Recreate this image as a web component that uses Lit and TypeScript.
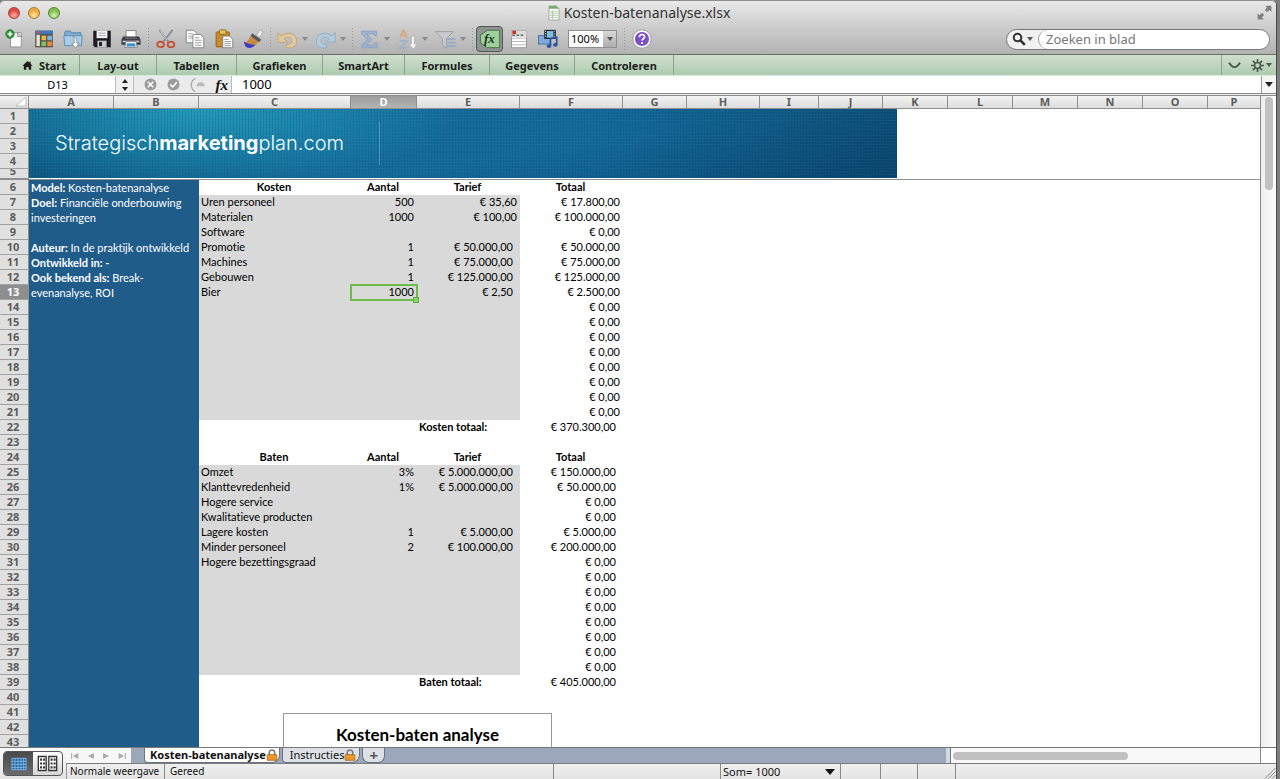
import { LitElement, html, css, svg, nothing } from "lit";
import { customElement, property, state } from "lit/decorators.js";
import { classMap } from "lit/directives/class-map.js";
import { styleMap } from "lit/directives/style-map.js";

const icons: Record<string, unknown> = {
  create: svg`<rect x="6.5" y="4.500" width="13" height="17" fill="#fcfcfc" stroke="#8b8b8b"/><path d="M15 4.500l4.500 4.500H15z" fill="#ddd" stroke="#8b8b8b"/><circle cx="6" cy="6" r="5" fill="#2f9a34" stroke="#1c6e22"/><path d="M6 3v6M3 6h6" stroke="#fff" stroke-width="2"/>`,
  gallery: svg`<rect x="1.500" y="2" width="21" height="20" fill="#5a5148"/><rect x="1.500" y="2" width="21" height="4" fill="#3b78bb"/><path d="M3 4h4" stroke="#e44" stroke-width="2"/><rect x="3" y="7" width="4" height="13.500" fill="#e9e4d8"/><rect x="9" y="8" width="5.500" height="5.500" fill="#e8b64a"/><rect x="16" y="8" width="5.500" height="5.500" fill="#79b5e2"/><rect x="9" y="15" width="5.500" height="5.500" fill="#79c265"/><rect x="16" y="15" width="5.500" height="5.500" fill="#e98a3a"/>`,
  open: svg`<path d="M2 4.500l1-2h6l1 2h11.500v14H2z" fill="#7fb0d4" stroke="#4a7ea6"/><path d="M1 8h22l-1 12H2z" fill="#a7cde8" stroke="#5588ae"/><path d="M12 9c4 1 5 4 4.500 8h3L15 23l-4.500-6h3c.5-3 0-6-1.500-8z" fill="#fff" stroke="#777" stroke-width=".8"/>`,
  save: svg`<path d="M1.500 2h21v20H3.500l-2-2z" fill="#1d1d1f"/><rect x="5.500" y="2" width="13" height="9" fill="#f4f4f4"/><path d="M7.500 5h9M7.500 8h9" stroke="#999"/><rect x="6.500" y="14" width="11" height="8" fill="#c9c9cc"/><rect x="8.500" y="15.500" width="3.500" height="5" fill="#222"/>`,
  print: svg`<rect x="6" y="2" width="12" height="8" fill="#fff" stroke="#777"/><path d="M2.500 9h19l2 4v6h-23v-6z" fill="#3b3d42"/><path d="M5 11h14" stroke="#888"/><path d="M2 15h20" stroke="#c9ccd2" stroke-width="2"/><path d="M6 15h12l1.500 7h-15z" fill="#fff" stroke="#777"/><path d="M7 17h10l.6 4H6.400z" fill="#3f92cd"/>`,
  cut: svg`<path d="M4 1l10.500 14M20 1L9 15" stroke="#8a8f96" stroke-width="2.200" fill="none"/><path d="M5 2l8 11" stroke="#eee" stroke-width=".8"/><ellipse cx="5.500" cy="18.500" rx="4" ry="3.200" fill="none" stroke="#c4553b" stroke-width="2.300"/><ellipse cx="18" cy="18.500" rx="4" ry="3.200" fill="none" stroke="#c4553b" stroke-width="2.300"/>`,
  copy: svg`<path d="M1.500 1.500h9l4 4v11h-13z" fill="#fafafa" stroke="#777"/><path d="M4 5.500h5M4 8.500h7M4 11h7" stroke="#999"/><path d="M9.500 6.500h9l4 4v12h-13z" fill="#fff" stroke="#777"/><path d="M12 10.500h5M12 13.500h8M12 16.500h8M12 19.500h8" stroke="#888"/>`,
  paste: svg`<rect x="2.500" y="3.500" width="16" height="18" rx="1" fill="#c98b2d" stroke="#8b5d18"/><rect x="6.500" y="1" width="8" height="5.500" rx="1" fill="#e2c15b" stroke="#86631a"/><path d="M10.500 8.500h8l4 4v10h-12z" fill="#fff" stroke="#777"/><path d="M12.500 12.500h5M12.500 15h8M12.500 17.500h8M12.500 20h8" stroke="#888"/>`,
  brush: svg`<path d="M16 8l4-7 4 2.500-4 6.500z" fill="#eee" stroke="#999" stroke-width=".8"/><path d="M11 5l11 8-3 3-10-7z" fill="#55565c"/><path d="M9 8l9.500 7.500c-3 4-8 7-12.500 6-2-.5-4-3-5-6 4 1 6-3 8-7.500z" fill="#c98a45"/><path d="M1 15c3 2 9 4 14 4-3 4.500-10 5-12.500 1z" fill="#3b3fc4"/>`,
  undo: svg`<path d="M1 4v11h11l-4-3.500c4-3.500 9-2 9 2 0 2.500-1.500 4-4.500 4H11v4h4c4.500 0 7.500-3.500 7.500-8C22.500 5 11 2 4.800 8z" fill="#e2c8a0" stroke="#c4a06a"/>`,
  redo: svg`<path d="M23 4v11H12l4-3.500c-4-3.500-9-2-9 2 0 2.500 1.500 4 4.500 4H13v4H9c-4.500 0-7.500-3.500-7.500-8C1.500 5 13 2 19.200 8z" fill="#b3cbdc" stroke="#88adc8"/>`,
  sum: svg`<path d="M3 2.500h17v5h-2.500l-1-2H9l5.500 6.500L8 18.500h8.500l1.500-2.500h2.500v5.500H3v-3L9.500 12 3 5.500z" fill="#9db3cf" stroke="#7f99bb" stroke-width=".8"/>`,
  sort: svg`<path d="M3.500 10L7.500 1l4 9M5 7.500h5" stroke="#d2ab85" stroke-width="2.200" fill="none"/><path d="M3 13.500h8.500L3.500 21.500h8.500" stroke="#a0b1c9" stroke-width="2.200" fill="none"/><path d="M16.500 8v9h-3l5 6 5-6h-3.500V8z" fill="#f2f2f2" stroke="#aaa" stroke-width=".8"/>`,
  filter: svg`<path d="M.5 3h20.500L13 11v11l-4.500-4v-7z" fill="#c9c9cb" stroke="#9a9a9c"/><path d="M14 11.500h9.500M14 15.500h9.500M14 19.500h9.500" stroke="#93abc9" stroke-width="2"/>`,
  fx: svg`<path d="M9 2.500h13.500v19H9L1.500 16V8z" fill="#9fcf9d" stroke="#3f6a42"/>`,
  report: svg`<rect x="3" y="2" width="18" height="20.500" fill="#fff" stroke="#8b8b8b"/><rect x="3" y="2" width="18" height="7.500" fill="#dcdcdc"/><path d="M4 4h4.500" stroke="#c8372d" stroke-width="4"/><path d="M4 7.500h3M9 7.500h3M14 7.500h3" stroke="#666" stroke-width="2"/><path d="M3 11h18M3 15h18M3 19h18" stroke="#aaa"/>`,
  media: svg`<rect x="0.500" y="8" width="14" height="10" fill="#7fa9dd" stroke="#3c66a2"/><rect x="7.500" y="1" width="14" height="11" fill="#23272e"/><rect x="10.500" y="2.500" width="8" height="8" fill="#7cc0ea"/><path d="M9 2v9M20 2v9" stroke="#ddd" stroke-dasharray="1.500 1.500"/><path d="M15 20.500V11.500l7.500-1.500v9" stroke="#2c55a0" stroke-width="2" fill="none"/><ellipse cx="13.200" cy="20.500" rx="2.800" ry="2.300" fill="#2c55a0"/><ellipse cx="20.800" cy="19" rx="2.800" ry="2.300" fill="#2c55a0"/>`,
  help: svg`<circle cx="12" cy="12" r="11" fill="#fff" stroke="#8d8d99"/><circle cx="12" cy="12" r="8.500" fill="#7a51c4"/><path d="M8.800 9.800c0-4.200 6.400-4.200 6.400-.4 0 2.300-3 2.300-3 4.400M12.200 15.500v2.500" stroke="#fff" stroke-width="2" fill="none"/>`,
  document: svg`<path d="M4.500 1.500h11l4 4v17h-15z" fill="#fff" stroke="#888"/><path d="M4.500 1.500h11l4 4h-15z" fill="#6fae63"/><path d="M6 10h12M6 13h12M6 16h12M6 19h12M10 8v14" stroke="#8fbd86"/>`,
  home: svg`<path d="M12 2L1 12.500h3V21h5.500v-6h5v6H20v-8.500h3L19 8.500V4h-3v2z" fill="#1c1c1c"/>`,
  full: svg`<path d="M13 1h10v10l-3.200-3.200L16 11.500 12.500 8l3.700-3.700zM11 23H1V13l3.200 3.200L8 12.500 11.500 16l-3.700 3.700z" fill="#808080"/>`,
  search: svg`<circle cx="9.500" cy="9.500" r="6.500" fill="none" stroke="#333" stroke-width="3.500"/><path d="M14 14l8 8" stroke="#333" stroke-width="4.500"/>`,
  chevron: svg`<path d="M2 7Q12 23 22 7" fill="none" stroke="#3d5540" stroke-width="3.500"/>`,
  gear: svg`<circle cx="12" cy="12" r="5.500" fill="none" stroke="#4c5a4d" stroke-width="3"/><path d="M12 0v6M12 18v6M0 12h6M18 12h6M3.500 3.500l4.200 4.200M16.300 16.300l4.200 4.200M20.500 3.500l-4.200 4.200M7.700 16.300l-4.200 4.200" stroke="#4c5a4d" stroke-width="3"/>`,
  cancel: svg`<circle cx="12" cy="12" r="11" fill="#9c9c9c"/><path d="M7 7l10 10M17 7L7 17" stroke="#fff" stroke-width="3"/>`,
  accept: svg`<circle cx="12" cy="12" r="11" fill="#9c9c9c"/><path d="M6 12l4.500 4.500L18 8" stroke="#fff" stroke-width="3" fill="none"/>`,
  builder: svg`<path d="M8 2C0 6 0 18 8 22" fill="none" stroke="#aaa" stroke-width="2"/><path d="M10 14a6 6 0 0 1 12 0z" fill="#bbb"/>`,
  lock: svg`<path d="M6.500 12V7.500a5.500 5.500 0 0 1 11 0V12" fill="none" stroke="#777" stroke-width="3"/><rect x="2" y="11" width="20" height="12" rx="1.500" fill="#e58a1c" stroke="#94560d"/><path d="M3 14.500h18M3 18h18" stroke="#f6c16c"/>`,
  normal: svg`<rect x="1" y="3" width="22" height="18" fill="#2b5f94"/><path d="M1 3.500h22M1 8h22M1 12.500h22M1 17h22M1 20.500h22M1.500 3v18M6 3v18M10.500 3v18M15 3v18M19 3v18M22.500 3v18" stroke="#7dbdf0" stroke-width="1.300"/>`,
  layout: svg`<path d="M1.500 4h9v16h-9zM13.500 4h9v16h-9z" fill="#fff" stroke="#333" stroke-width="1.500"/><path d="M3.500 7.500h6M3.500 12h6M3.500 16.500h6M15.500 7.500h6M15.500 12h6M15.500 16.500h6" stroke="#333" stroke-width="2.500" stroke-dasharray="2.300 1.200"/>`,
  grip: svg`<path d="M2 23L23 2M9 23L23 9M16 23l7-7" stroke="#888" stroke-width="2"/>`,
  first: svg`<path d="M4 5v14" stroke="#aaa" stroke-width="2.500"/><path d="M20 5v14L7 12z" fill="#aaa"/>`,
  prev: svg`<path d="M19 5v14L5 12z" fill="#aaa"/>`,
  next: svg`<path d="M5 5v14l14-7z" fill="#aaa"/>`,
  last: svg`<path d="M20 5v14" stroke="#aaa" stroke-width="2.500"/><path d="M4 5v14l13-7z" fill="#aaa"/>`,
};

@customElement("x-icon")
class XIcon extends LitElement {
  @property() name = "";
  @property({ type: Number }) size = 20;
  static styles = css`
    :host { display: inline-flex; flex: none; }
  `;
  render() {
    return html`<svg width=${this.size} height=${this.size} viewBox="0 0 24 24" aria-hidden="true">${icons[this.name]}</svg>`;
  }
}

type Row = { c?: string; d?: string; e?: string; f?: string; head?: boolean; grey?: boolean; total?: boolean; flush?: boolean };

const columns: [string, number | null][] = [
  ["A", 85], ["B", 85], ["C", 152], ["D", 66], ["E", 103], ["F", 103], ["G", 64], ["H", 73],
  ["I", 59], ["J", 64], ["K", 65], ["L", 65], ["M", 65], ["N", 65], ["O", 65], ["P", null],
];

const rows: Record<number, Row> = {
  6: { c: "Kosten", d: "Aantal", e: "Tarief", f: "Totaal", head: true },
  7: { c: "Uren personeel", d: "500", e: "€ 35,60", f: "€ 17.800,00", flush: true },
  8: { c: "Materialen", d: "1000", e: "€ 100,00", f: "€ 100.000,00", flush: true },
  9: { c: "Software", f: "€ 0,00" },
  10: { c: "Promotie", d: "1", e: "€ 50.000,00", f: "€ 50.000,00" },
  11: { c: "Machines", d: "1", e: "€ 75.000,00", f: "€ 75.000,00" },
  12: { c: "Gebouwen", d: "1", e: "€ 125.000,00", f: "€ 125.000,00" },
  13: { c: "Bier", d: "1000", e: "€ 2,50", f: "€ 2.500,00" },
  22: { e: "Kosten totaal:", f: "€ 370.300,00", total: true },
  24: { c: "Baten", d: "Aantal", e: "Tarief", f: "Totaal", head: true },
  25: { c: "Omzet", d: "3%", e: "€ 5.000.000,00", f: "€ 150.000,00" },
  26: { c: "Klanttevredenheid", d: "1%", e: "€ 5.000.000,00", f: "€ 50.000,00" },
  27: { c: "Hogere service", f: "€ 0,00" },
  28: { c: "Kwalitatieve producten", f: "€ 0,00" },
  29: { c: "Lagere kosten", d: "1", e: "€ 5.000,00", f: "€ 5.000,00" },
  30: { c: "Minder personeel", d: "2", e: "€ 100.000,00", f: "€ 200.000,00" },
  31: { c: "Hogere bezettingsgraad", f: "€ 0,00" },
  39: { e: "Baten totaal:", f: "€ 405.000,00", total: true },
};
for (let n = 14; n <= 21; n++) rows[n] = { f: "€ 0,00" };
for (let n = 32; n <= 38; n++) rows[n] = { f: "€ 0,00" };
for (let n = 7; n <= 38; n++) if (n < 22 || n > 24) rows[n].grey = true;

@customElement("sheet-grid")
class SheetGrid extends LitElement {
  static styles = css`
    :host { display: block; position: relative; overflow: hidden; background: #fff; flex: 1; min-width: 0;
      border-right: 1px solid #8a8a8a; border-top: 1px solid #8a8a8a; box-sizing: border-box; }
    table { border-collapse: separate; border-spacing: 0; table-layout: fixed; width: 100%;
      font: 11px/14px Lato, sans-serif; font-variant-ligatures: none; color: #000; }
    th, td { padding: 0; height: 15px; white-space: nowrap; box-sizing: border-box; }
    td { vertical-align: top; }
    thead th { height: 13px; font: 700 11px/12px "Noto Sans", sans-serif; color: #5c5c5c;
      background: linear-gradient(#f4f4f4, #dcdcdc); border-right: 1px solid #8f8f8f; border-bottom: 1px solid #8f8f8f; }
    thead th.active { background: linear-gradient(#9c9c9c, #b4b4b4); color: #fff; }
    thead th:last-child { border-right: 0; }
    .corner svg { display: block; margin-left: auto; margin-right: 1px; }
    tbody th { font: 700 11px/14px "Noto Sans", sans-serif; color: #5c5c5c; background: #e0e0e0;
      border-right: 1px solid #8f8f8f; border-bottom: 1px solid #a2a2a2; padding-right: 2px; }
    tbody th.active { background: #8e8e8e; color: #fff; }
    .short th, .short { height: 11px; }
    .short th { border-bottom: 2px solid #8f8f8f; vertical-align: top; }
    .clip { display: flex; align-items: flex-end; justify-content: center; height: 7px; line-height: 10px; overflow: hidden; }
    .bannercell { border-bottom: 1px solid #8f8f8f; }
    .banner { width: 868px; height: 69px; display: flex; align-items: center; box-sizing: border-box; padding: 0 0 2px 26px;
      background:
        repeating-linear-gradient(90deg, rgba(8, 60, 100, 0.18) 0 1px, transparent 1px 3px),
        repeating-linear-gradient(0deg, rgba(60, 170, 210, 0.08) 0 1px, transparent 1px 3px),
        radial-gradient(ellipse 260px 80px at 170px 0, #229abb, rgba(30, 140, 180, 0) 100%),
        linear-gradient(172deg, rgba(0, 30, 70, 0) 60%, rgba(6, 50, 90, 0.4)),
        linear-gradient(90deg, #0e5a83, #146b98 35%, #12699a 65%, #0d4f76); }
    .logo { font: 300 20px/28px Inter, sans-serif; color: #f2fbff; border-right: 1px solid rgba(110, 190, 225, 0.5); padding: 8px 35px 8px 0; }
    .logo b { font-weight: 700; color: #fff; }
    .side { background: #1f5c8a; color: #fff; white-space: normal; }
    .side div { padding-left: 2px; text-align: left; font-weight: 400; line-height: 15px; }
    .side p { margin: 0; min-height: 15px; }
    .c { padding-left: 2px; }
    .num { text-align: right; padding-right: 3px; }
    .pad { padding-right: 7px; }
    .grey { background: #d9d9d9; }
    .head td { font-weight: 700; text-align: center; padding: 0 2px 0 0; }
    .head td.side { padding: 0; }
    .side b { font-weight: 700; }
    .total .e { font-weight: 700; text-align: left; padding-left: 2px; }
    .selected { position: relative; box-shadow: 0 0 0 1px #6dbb49, inset 0 0 0 1px #6dbb49; }
    .handle { position: absolute; right: -2px; bottom: -3px; width: 4px; height: 4px; background: #8ed36b; border: 1px solid #5da93b; }
    .chart { position: absolute; left: 283px; top: 617px; width: 269px; height: 240px; box-sizing: border-box;
      border: 1px solid #999; background: #fff; text-align: center; padding-top: 9px; }
    .chart h2 { margin: 0; font: 700 17px/24px Lato, sans-serif; color: #000; }
  `;

  private cells(n: number) {
    const r = rows[n] ?? {};
    const g = !!r.grey;
    return html`
      <td class=${classMap({ c: true, grey: g })}>${r.c}</td>
      <td class=${classMap({ num: true, grey: g, selected: n === 13 })}>${r.d}${n === 13 ? html`<span class="handle"></span>` : nothing}</td>
      <td class=${classMap({ num: true, e: true, grey: g, pad: !r.flush })}>${r.e}</td>
      <td class=${classMap({ num: true, pad: n > 21 })}>${r.f}</td>
      <td colspan="10"></td>`;
  }

  render() {
    const frozen = [1, 2, 3, 4, 5];
    const body = Array.from({ length: 39 }, (_, i) => i + 6);
    return html`
      <table>
        <colgroup>
          <col style=${styleMap({ width: "29px" })} />
          ${columns.map(([, w]) => html`<col style=${styleMap({ width: w ? w + "px" : "auto" })} />`)}
        </colgroup>
        <thead>
          <tr>
            <th class="corner"><svg width="11" height="10" viewBox="0 0 11 10"><path d="M10 0v9H0z" fill="#fff" stroke="#aaa" stroke-width=".7" /></svg></th>
            ${columns.map(([l]) => html`<th class=${classMap({ active: l === "D" })}>${l}</th>`)}
          </tr>
        </thead>
        <tbody>
          ${frozen.map((n) => html`<tr class=${n === 5 ? "short" : ""}>
            <th>${n === 5 ? html`<div class="clip">5</div>` : n}</th>
            ${n === 1 ? html`<td class="bannercell" colspan="16" rowspan="5">
              <div class="banner"><div class="logo">Strategisch<b>marketing</b>plan.com</div></div></td>` : nothing}
          </tr>`)}
          ${body.map((n) => html`<tr class=${classMap({ head: !!rows[n]?.head, total: !!rows[n]?.total })}>
            <th class=${classMap({ active: n === 13 })}>${n}</th>
            ${n === 6 ? html`<td class="side" colspan="2" rowspan="39"><div>
              <p><b>Model:</b> Kosten-batenanalyse</p>
              <p><b>Doel:</b> Financiële onderbouwing investeringen</p>
              <p></p>
              <p><b>Auteur:</b> In de praktijk ontwikkeld</p>
              <p><b>Ontwikkeld in: -</b></p>
              <p><b>Ook bekend als:</b> Break-<br />evenanalyse, ROI</p>
            </div></td>` : nothing}
            ${this.cells(n)}
          </tr>`)}
        </tbody>
      </table>
      <section class="chart"><h2>Kosten-baten analyse</h2></section>`;
  }
}

@customElement("app-root")
class AppRoot extends LitElement {
  @state() private sheet = 0;

  static styles = css`
    :host { display: flex; flex-direction: column; height: 100vh; box-sizing: border-box; overflow: hidden;
      padding-right: 3px; background: #7e7e7e; font: 11px/15px "Noto Sans", sans-serif; color: #111; }
    button, input, select { font: inherit; color: inherit; border: 0; background: none; padding: 0; margin: 0; outline: 0; appearance: none; border-radius: 0; }
    button { display: inline-flex; align-items: center; justify-content: center; }
    .window { flex: 1; min-height: 0; display: flex; flex-direction: column; border-right: 1px solid #4a4a4a; background: #e9e9e9; border-radius: 5px 5px 0 0; }
    .top { background: linear-gradient(#e9e9e9, #cfcfcf 45%, #b2b2b2); border-top: 1px solid #8d8d8d; border-bottom: 1px solid #6d6d6d; border-radius: 5px 5px 0 0; }
    .title { display: grid; grid-template-columns: 1fr auto 1fr; height: 23px; align-items: center; }
    .lights { display: flex; gap: 8px; padding-left: 8px; }
    .light { width: 12px; height: 12px; border-radius: 6px; border: 1px solid #9b4a44; box-sizing: border-box; background: radial-gradient(circle at 50% 75%, #ffb1a6, #e2463f 60%); }
    .light.y { border-color: #a37b2d; background: radial-gradient(circle at 50% 75%, #ffe7a0, #eda93b 60%); }
    .light.g { border-color: #55843a; background: radial-gradient(circle at 50% 75%, #d3f3ae, #7cbf4b 60%); }
    h1 { margin: 0; font: 400 14px/20px "Noto Sans", sans-serif; color: #333; display: flex; align-items: center; gap: 2px; }
    .full { justify-self: end; margin-right: 4px; }
    .toolbar { display: flex; align-items: center; height: 30px; padding-right: 6px; }
    .tool { width: 29px; height: 26px; }
    .menu { width: 38px; height: 26px; gap: 4px; justify-content: flex-start; padding-left: 4px; }
    .caret { width: 0; height: 0; border: 3px solid transparent; border-top: 4px solid #555; border-bottom: 0; }
    .menu .caret { border-top-color: #888; }
    .sep { width: 6px; height: 22px; background: linear-gradient(90deg, transparent 3px, #999 3px 4px, transparent 4px); mask: repeating-linear-gradient(#000 0 1px, transparent 1px 3px); }
    .pressed { width: 27px; margin: 0 1px; box-sizing: border-box; border: 1px solid #555; border-radius: 4px; background: #8e9290; position: relative; }
    .pressed i { position: absolute; font: italic 700 13px/16px "Liberation Serif", serif; color: #1d331f; left: 7px; top: 4px; }
    .zoom { display: flex; width: 49px; height: 18px; margin: 0 4px 0 6px; background: #fff; border: 1px solid #8e8e8e; box-sizing: border-box; position: relative; }
    .zoom select { width: 100%; padding-left: 2px; line-height: 16px; color: #000; }
    .drop { position: absolute; right: 0; top: 0; width: 13px; height: 16px; background: linear-gradient(#d9d9d9, #adadad); display: flex; align-items: center; justify-content: center; pointer-events: none; }
    .search { margin-left: auto; display: flex; width: 264px; height: 21px; box-sizing: border-box; border: 1px solid #777; border-radius: 11px; background: #f1f1f1; overflow: hidden; }
    .search button { width: 31px; gap: 1px; }
    .search input { flex: 1; min-width: 0; border-left: 1px solid #999; border-radius: 10px; background: #fff; font-size: 13px; padding-left: 7px; color: #333; }
    .search input::placeholder { color: #777; opacity: 1; }
    .ribbon { display: flex; height: 20px; background: linear-gradient(#cfe0cf, #aecbae); border-bottom: 1px solid #dfe8df; }
    .tabs { display: grid; grid-template-columns: 80px 77px 80px 86px 82px 85px 85px 99px; }
    .tabs button { border-right: 1px solid #8ba48b; font-weight: 700; color: #1c1c1c; gap: 6px; }
    .tabs button:first-child { padding-left: 9px; }
    .extra { margin-left: auto; display: flex; align-items: center; border-left: 1px solid #8ba48b; padding: 0 4px 0 6px; gap: 10px; }
    .extra button { gap: 2px; }
    .formula { display: flex; height: 17px; background: #fff; border-bottom: 1px solid #8a8a8a; }
    .name { width: 115px; text-align: center; font-size: 11px; color: #000; background: #fff; }
    .stepper { width: 19px; flex-direction: column; gap: 4px; background: #f0f0f0; border-left: 1px solid #bbb; border-right: 1px solid #bbb; box-sizing: border-box; }
    .stepper .up { border: 3px solid transparent; border-bottom: 4px solid #222; border-top: 0; }
    .stepper .down { border: 3px solid transparent; border-top: 4px solid #222; border-bottom: 0; }
    .fbuttons { display: flex; width: 98px; align-items: center; justify-content: space-between; padding: 0 3px 0 10px; box-sizing: border-box; background: #ebebeb; border-right: 1px solid #bbb; }
    .fbuttons em { font: italic 700 15px/16px "Liberation Serif", serif; }
    .value { flex: 1; min-width: 0; padding-left: 10px; font-size: 13px; color: #000; }
    .expand { width: 15px; border-left: 1px solid #999; background: #f6f6f6; }
    .expand .caret { border-width: 4px 4px 0; border-top: 5px solid #222; }
    .gap { height: 1px; background: #ececec; }
    .main { flex: 1; min-height: 0; display: flex; }
    .vbar { width: 15px; background: linear-gradient(90deg, #eee, #fcfcfc); border-top: 1px solid #8a8a8a; padding: 1px 3px; box-sizing: border-box; }
    .vthumb { height: 93px; width: 8px; margin-left: 1px; border-radius: 4px; background: #c1c1c1; }
    footer { display: grid; grid-template-columns: 66px minmax(0, 1fr); grid-template-rows: 16px 15px; border-top: 1px solid #777; box-sizing: border-box; background: linear-gradient(#fafafa, #e4e4e4); }
    .views { grid-row: 1 / 3; display: flex; align-self: center; height: 25px; margin: 0 3px; border: 1px solid #555; border-radius: 4px; overflow: hidden; box-sizing: border-box; background: linear-gradient(#fff, #d5d5d5); }
    .views button { flex: 1; }
    .views .on { background: linear-gradient(#4a4a4a, #6b6b6b); }
    .strip { display: flex; background: #9ba8bb; border-bottom: 1px solid #7b7b7b; }
    .nav { display: flex; width: 65px; justify-content: space-evenly; background: #f7f7f7; }
    .nav button { width: 14px; }
    .sheets { display: flex; margin-left: 13px; gap: 2px; height: 15px; flex: 1; min-width: 0; }
    .sheets button { background: #dde1e6; border: 1px solid #6b7381; border-top: 0; border-radius: 0 0 8px 4px; padding: 0 3px 0 7px; white-space: nowrap; color: #111; line-height: 14px; }
    .sheets .on { background: #fff; font-weight: 700; padding: 0 1px 0 5px; }
    .sheets .plus { width: 23px; padding: 0; font: 700 15px/14px "Noto Sans", sans-serif; color: #555; border-radius: 0 0 7px 7px; }
    .split { width: 4px; background: #d5d9de; border-right: 1px solid #777; }
    .hbar { width: 310px; background: #f8f8f8; padding: 4px 2px; box-sizing: border-box; border-right: 1px solid #888; }
    .hthumb { width: 175px; height: 8px; border-radius: 4px; background: #c1c1c1; }
    .cornerbox { width: 15px; background: #fff; }
    .status { display: grid; grid-template-columns: 98px 389px 167px 120px 40px 37px 38px 1fr; font-size: 10px; border-left: 1px solid #999; }
    .status > * { border-right: 1px solid #888; padding-left: 3px; box-sizing: border-box; white-space: nowrap; color: #111; line-height: 15px; }
    .status > .wide { padding-left: 5px; }
    .status > .end { border-right: 0; display: flex; justify-content: flex-end; align-items: flex-end; }
    .status button { display: flex; justify-content: space-between; padding-right: 5px; font-size: 11px; padding-left: 2px; }
    .status button .caret { border-width: 5px 5px 0; border-top: 6px solid #111; }
  `;

  private tool(name: string, label: string) {
    return html`<button class="tool" aria-label=${label}><x-icon name=${name}></x-icon></button>`;
  }
  private menu(name: string, label: string) {
    return html`<button class="menu" aria-label=${label}><x-icon name=${name} .size=${21}></x-icon><span class="caret"></span></button>`;
  }

  render() {
    const sep = html`<span class="sep"></span>`;
    const tabs = ["Start", "Lay-out", "Tabellen", "Grafieken", "SmartArt", "Formules", "Gegevens", "Controleren"];
    const sheets = ["Kosten-batenanalyse", "Instructies"];
    return html`
      <div class="window">
        <header class="top">
          <div class="title">
            <div class="lights">
              <button class="light" aria-label="Sluiten"></button>
              <button class="light y" aria-label="Minimaliseren"></button>
              <button class="light g" aria-label="Vergroten"></button>
            </div>
            <h1><x-icon name="document" .size=${16}></x-icon>Kosten-batenanalyse.xlsx</h1>
            <button class="full" aria-label="Volledig scherm"><x-icon name="full" .size=${15}></x-icon></button>
          </div>
          <div class="toolbar">
            ${this.tool("create", "Nieuw")}${this.tool("gallery", "Galerie")}${this.tool("open", "Openen")}${this.tool("save", "Bewaren")}${this.tool("print", "Afdrukken")}
            ${sep}
            ${this.tool("cut", "Knippen")}${this.tool("copy", "Kopiëren")}${this.tool("paste", "Plakken")}${this.tool("brush", "Opmaak")}
            ${sep}${this.menu("undo", "Herstel")}${this.menu("redo", "Opnieuw")}
            ${sep}${this.menu("sum", "Som")}${this.menu("sort", "Sorteren")}${this.menu("filter", "Filter")}
            ${sep}
            <button class="tool pressed" aria-label="Formules"><x-icon name="fx" .size=${22}></x-icon><i>fx</i></button>
            ${this.tool("report", "Werkset")}${this.tool("media", "Media")}
            <div class="zoom"><select aria-label="Zoom"><option>100%</option></select><span class="drop"><span class="caret"></span></span></div>
            ${sep}${this.tool("help", "Help")}
            <div class="search">
              <button aria-label="Zoekopties"><x-icon name="search" .size=${14}></x-icon><span class="caret"></span></button>
              <input aria-label="Zoeken in blad" placeholder="Zoeken in blad" />
            </div>
          </div>
        </header>
        <nav class="ribbon">
          <div class="tabs">
            ${tabs.map((t, i) => html`<button>${i === 0 ? html`<x-icon name="home" .size=${11}></x-icon>` : nothing}${t}</button>`)}
          </div>
          <div class="extra">
            <button aria-label="Lint"><x-icon name="chevron" .size=${13}></x-icon></button>
            <button aria-label="Instellingen"><x-icon name="gear" .size=${13}></x-icon><span class="caret"></span></button>
          </div>
        </nav>
        <div class="formula">
          <input class="name" aria-label="Naamvak" value="D13" />
          <button class="stepper" aria-label="Namen"><span class="up"></span><span class="down"></span></button>
          <div class="fbuttons">
            <button aria-label="Annuleren"><x-icon name="cancel" .size=${13}></x-icon></button>
            <button aria-label="Invoeren"><x-icon name="accept" .size=${13}></x-icon></button>
            <button aria-label="Opbouwfunctie"><x-icon name="builder" .size=${16}></x-icon></button>
            <em>fx</em>
          </div>
          <input class="value" aria-label="Formule" value="1000" />
          <button class="expand" aria-label="Uitvouwen"><span class="caret"></span></button>
        </div>
        <div class="gap"></div>
        <main class="main">
          <sheet-grid></sheet-grid>
          <div class="vbar"><div class="vthumb"></div></div>
        </main>
        <footer>
          <div class="views">
            <button class="on" aria-label="Normale weergave"><x-icon name="normal" .size=${16}></x-icon></button>
            <button aria-label="Pagina-indeling"><x-icon name="layout" .size=${21}></x-icon></button>
          </div>
          <div class="strip">
            <div class="nav">
              ${["first", "prev", "next", "last"].map((n) => html`<button aria-label=${n}><x-icon name=${n} .size=${10}></x-icon></button>`)}
            </div>
            <div class="sheets">
              ${sheets.map((s, i) => html`<button class=${classMap({ on: i === this.sheet })} @click=${() => (this.sheet = i)}>${s}<x-icon name="lock" .size=${12}></x-icon></button>`)}
              <button class="plus" aria-label="Blad toevoegen">+</button>
            </div>
            <div class="split"></div>
            <div class="hbar"><div class="hthumb"></div></div>
            <div class="cornerbox"></div>
          </div>
          <div class="status">
            <span>Normale weergave</span><span class="wide">Gereed</span><span></span>
            <button>Som= 1000<span class="caret"></span></button>
            <span></span><span></span><span></span><span class="end"><x-icon name="grip" .size=${12}></x-icon></span>
          </div>
        </footer>
      </div>`;
  }
}
